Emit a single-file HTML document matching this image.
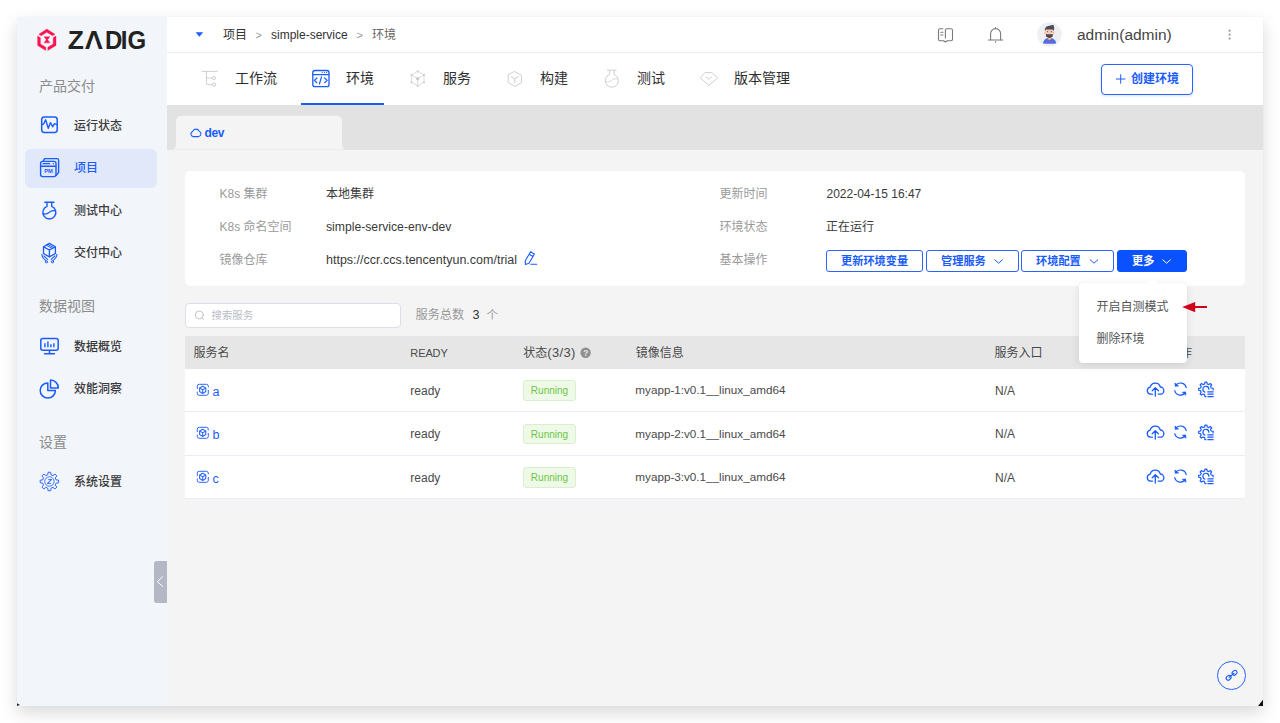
<!DOCTYPE html>
<html lang="zh-CN">
<head>
<meta charset="utf-8">
<title>Zadig - 环境</title>
<style>
*{box-sizing:border-box;margin:0;padding:0}
html,body{width:1280px;height:723px;overflow:hidden;background:#fff}
body{font-family:"Liberation Sans","Noto Sans CJK SC",sans-serif;color:#303133;font-size:12px;position:relative}
.win{position:absolute;left:17px;top:17px;width:1246px;height:689px;background:#f4f4f4;box-shadow:0 0 1px rgba(0,0,0,.05),0 7px 16px rgba(0,0,0,.15)}
.o{position:absolute;left:-17px;top:-17px;width:1280px;height:723px;overflow:hidden;clip-path:inset(17px 17px 17px 17px)}
.o>*,.a{position:absolute}
svg{position:absolute;overflow:visible}
.t{white-space:nowrap;line-height:20px;height:20px}
/* sidebar */
.side{left:17px;top:17px;width:150px;height:689px;background:#f2f5fa}
.grp{left:39px;font-size:14px;color:#8c8c8c}
.on{left:25px;top:148.5px;width:132px;height:39.5px;border-radius:6px;background:#e0e8fa}
.mi{left:74px;font-size:12px;font-weight:500;color:#3a3a3a}
.mi.act{color:#1a5cff}
/* header */
.hdr{left:167px;top:17px;width:1096px;height:36px;background:#fff;border-bottom:1px solid #e8ebf1}
.nav{left:167px;top:53px;width:1096px;height:52px;background:#fff}
.nt{top:68px;font-size:14px;font-weight:400;color:#2e2e2e}
.band{left:167px;top:105px;width:1096px;height:44.5px;background:#e2e2e2}
.card{left:185px;top:170.5px;width:1060px;height:115.5px;background:#fff;border-radius:5px}
.lbl{font-size:12px;color:#9a9a9a}
.val{font-size:12.5px;color:#3a3a3a}
.btn{top:250.3px;height:22px;border:1px solid #2a63ff;border-radius:3px;background:#fff;color:#1a5cff;font-size:11.2px;font-weight:700;line-height:20px;white-space:nowrap;padding-left:14px}
.btn.pri{background:#0a52ff;border-color:#0a52ff;color:#fff}
.th{left:185px;top:336.2px;width:1060px;height:32.8px;background:#e6e6e6}
.hc{top:343px;font-size:12px;color:#4a4a4a}
.row{left:185px;width:1060px;background:#fff;border-bottom:1px solid #e9edf5}
.rc{font-size:12px;color:#4a4a4a}
.nm{font-size:12.5px;color:#1a5cff}
.tag{left:522.8px;width:53.4px;height:20.6px;line-height:19.4px;border:1px solid #d9f0cb;background:#eff9e8;color:#6cc644;font-size:10px;border-radius:3px;text-align:center;white-space:nowrap}
.dd{left:1079px;top:283px;width:107.5px;height:80px;background:#fff;border-radius:4px;box-shadow:0 2px 10px rgba(0,0,0,.10),0 0 1px rgba(0,0,0,.08)}
.ddi{left:1096.5px;font-size:12px;color:#555}
</style>
</head>
<body>
<div class="win"><div class="o">
<!-- ============ SIDEBAR ============ -->
<div class="side"></div>
<svg style="left:30px;top:24px" width="130" height="32" viewBox="30 24 130 32">
  <g fill="#ff1352" stroke="#ff1352" stroke-width=".35" stroke-linejoin="round">
    <path d="M38.8 34.3 L46.8 29.1 L55 34.3 L52.6 35.8 L46.8 32.3 L41.2 35.8Z"/>
    <path d="M37.6 36 L40.4 37.7 L40.4 44 L45.8 47.2 L45.8 50.4 L37.6 45.5Z"/>
    <path d="M56 36 L53.2 37.7 L53.2 44 L47.8 47.2 L47.8 50.4 L56 45.5Z"/>
    <path d="M44 36.7 L50 36.7 L47.6 39.7 L50 42.8 L44 42.8 L46.3 39.7Z"/>
  </g>
  <g font-family="Liberation Sans, sans-serif" font-weight="700" font-size="24" fill="#222"><text transform="translate(67.7 49) scale(1.1 1.04)">Z</text><text transform="translate(84.6 49) scale(1.08 1.04)">A</text><text transform="translate(105 49) scale(1 1.04)" x="0 15.8 22.4">DIG</text></g>
  <path d="M91.5 41.5 L96.25 41.5 L97.6 45.5 L90.2 45.5Z" fill="#f2f5fa"/>
</svg>
<div class="t grp" style="top:75.5px">产品交付</div>
<div class="on"></div>
<div class="t mi" style="top:115.7px">运行状态</div>
<div class="t mi act" style="top:158.2px">项目</div>
<div class="t mi" style="top:200.7px">测试中心</div>
<div class="t mi" style="top:243.2px">交付中心</div>
<div class="t grp" style="top:296px">数据视图</div>
<div class="t mi" style="top:336.7px">数据概览</div>
<div class="t mi" style="top:379.2px">效能洞察</div>
<div class="t grp" style="top:432px">设置</div>
<div class="t mi" style="top:472.2px">系统设置</div>
<!-- sidebar icons -->
<svg style="left:36px;top:110px" width="30" height="30" viewBox="36 110 30 30" fill="none" stroke="#1a5cff" stroke-width="1.5" stroke-linecap="round" stroke-linejoin="round">
  <rect x="41.7" y="117" width="15.5" height="15.4" rx="2.6"/>
  <path d="M41.8 124.6 L43.6 124 L45.6 119.8 L48.3 128.3 L50.5 122.6 L52.7 126.8 L54.4 123.6 L57 124.6" stroke-width="1.4"/>
</svg>
<svg style="left:36px;top:152px" width="30" height="30" viewBox="36 152 30 30" fill="none" stroke="#1a5cff" stroke-width="1.4" stroke-linejoin="round" stroke-linecap="round">
  <path d="M43.2 161 L44.6 158.6 L57 158.6 Q58.6 158.6 58.6 160.2 L58.6 172.6 L56.2 175.2"/>
  <rect x="40.6" y="161.4" width="15.4" height="15.2" rx="2"/>
  <path d="M41 166.2 L55.6 166.2"/>
  <path d="M43 163.7 L49.6 163.7" stroke-width="1.2"/>
  <circle cx="53.4" cy="163.7" r=".7" fill="#1a5cff" stroke="none"/>
  <text x="44.2" y="173.3" font-family="Liberation Sans, sans-serif" font-size="5.6" font-weight="700" fill="#1a5cff" stroke="none" textLength="8.6" lengthAdjust="spacingAndGlyphs">PM</text>
</svg>
<svg style="left:36px;top:195px" width="30" height="30" viewBox="36 195 30 30" fill="none" stroke="#1a5cff" stroke-width="1.4" stroke-linecap="round" stroke-linejoin="round">
  <path d="M44.8 202.2 L54 202.2"/>
  <path d="M47 202.4 L47 206.4 A6.5 6.5 0 1 0 51.7 206.4 L51.7 202.4"/>
  <path d="M43.2 213.6 C46 215.4 48.4 213 50 211.8 C51.8 210.6 53.8 210.4 55.6 210.8" stroke-width="1.2"/>
</svg>
<svg style="left:36px;top:238px" width="30" height="30" viewBox="36 238 30 30" fill="none" stroke="#1a5cff" stroke-width="1.3" stroke-linecap="round" stroke-linejoin="round">
  <path d="M49.4 243.4 L55.4 246.7 L55.4 253.5 L49.4 256.9 L43.5 253.5 L43.5 246.7Z"/>
  <path d="M43.7 246.9 L49.4 250 L55.2 246.9 M49.4 250 L49.4 256.6"/>
  <path d="M46.3 245.1 L52.2 248.4 M47.7 244.3 L53.6 247.6" stroke-width="1"/>
  <path d="M41.9 254.2 C41.9 257 43.4 258.6 45.8 260.6 M43.9 255.8 L47.6 259.4" stroke-width="1.1"/>
  <path d="M56.9 254.2 C56.9 257 55.4 258.6 53 260.6 M54.9 255.8 L51.2 259.4" stroke-width="1.1"/>
  <circle cx="46.4" cy="261.8" r="1.1" stroke-width="1"/>
  <circle cx="52.4" cy="261.8" r="1.1" stroke-width="1"/>
</svg>
<svg style="left:36px;top:331px" width="30" height="30" viewBox="36 331 30 30" fill="none" stroke="#1a5cff" stroke-width="1.5" stroke-linecap="round" stroke-linejoin="round">
  <rect x="40.8" y="338.6" width="17.4" height="11.6" rx="2"/>
  <path d="M49.5 350.4 L49.5 353.4 M44.6 353.8 L54.4 353.8"/>
  <path d="M44.9 343.2 L44.9 347.3 M47.9 341.6 L47.9 347.3 M50.9 344.2 L50.9 347.3 M53.9 343.2 L53.9 347.3" stroke-width="1.4" stroke-linecap="butt"/>
</svg>
<svg style="left:36px;top:374px" width="30" height="30" viewBox="36 374 30 30" fill="none" stroke="#1a5cff" stroke-width="1.5" stroke-linejoin="round">
  <path d="M47.8 382.9 A7.6 7.6 0 1 0 55.4 390.5 L47.8 390.5Z"/>
  <path d="M50.5 380.1 L50.5 387.9 L58.3 387.9 A7.8 7.8 0 0 0 50.5 380.1Z"/>
</svg>
<svg style="left:36.1px;top:467.4px" width="30" height="30" viewBox="36 467 30 30" fill="none" stroke="#2b66ff" stroke-width="1" stroke-linejoin="round">
  <path d="M47.79 474.79 L48.09 472.29 L50.71 472.29 L51.01 474.79 L53.01 475.62 L54.98 474.06 L56.84 475.92 L55.28 477.89 L56.11 479.89 L58.61 480.19 L58.61 482.81 L56.11 483.11 L55.28 485.11 L56.84 487.08 L54.98 488.94 L53.01 487.38 L51.01 488.21 L50.71 490.71 L48.09 490.71 L47.79 488.21 L45.79 487.38 L43.82 488.94 L41.96 487.08 L43.52 485.11 L42.69 483.11 L40.19 482.81 L40.19 480.19 L42.69 479.89 L43.52 477.89 L41.96 475.92 L43.82 474.06 L45.79 475.62Z"/>
  <circle cx="49.4" cy="481.5" r="4.7" stroke-width=".9"/>
  <text x="46.9" y="484.3" font-family="Liberation Sans, sans-serif" font-size="7.6" font-weight="700" font-style="italic" fill="#2b66ff" stroke="none">Z</text>
</svg>
<!-- collapse handle -->
<div style="left:153.5px;top:561px;width:13.5px;height:41.5px;background:#b4b8c5;border-radius:3px 0 0 3px"></div>
<svg style="left:153px;top:572px" width="14" height="20" viewBox="153 572 14 20" fill="none" stroke="#fff" stroke-width="1" stroke-linecap="round" stroke-linejoin="round"><path d="M162.8 576.6 L157.4 581.6 L162.8 586.6"/></svg>
<!-- ============ HEADER ============ -->
<div class="hdr"></div>
<svg style="left:194px;top:30px" width="12" height="8" viewBox="194 30 12 8"><path d="M195.6 32.2 L203.2 32.2 L199.4 36.8Z" fill="#1a5cff"/></svg>
<div class="t" style="left:223px;top:24.6px;font-size:12px;color:#333">项目</div>
<div class="t" style="left:255.5px;top:24.6px;font-size:11px;color:#999">&gt;</div>
<div class="t" style="left:271px;top:24.6px;font-size:12px;color:#333">simple-service</div>
<div class="t" style="left:356.5px;top:24.6px;font-size:11px;color:#999">&gt;</div>
<div class="t" style="left:372px;top:24.6px;font-size:12px;color:#666">环境</div>
<!-- book -->
<svg style="left:934px;top:24px" width="24" height="22" viewBox="934 24 24 22" fill="none" stroke="#7a7a7a" stroke-width="1.1" stroke-linecap="round" stroke-linejoin="round">
  <path d="M942.8 28.7 L940 28.7 Q938.5 28.7 938.5 30.2 L938.5 39.2 Q938.5 40.7 940 40.7 L943.6 40.7 L945.4 42 L947.2 40.7 L951 40.7 Q952.5 40.7 952.5 39.2 L952.5 30.2 Q952.5 28.7 951 28.7 L946.9 28.7 Q945.4 28.7 945.4 30.2 L945.4 38"/>
  <path d="M940.7 32.2 L942.9 32.2 M940.7 35 L942.9 35"/>
</svg>
<!-- bell -->
<svg style="left:984px;top:24px" width="24" height="22" viewBox="984 24 24 22" fill="none" stroke="#7a7a7a" stroke-width="1.1" stroke-linecap="round" stroke-linejoin="round">
  <path d="M990.6 39.8 L990.6 33.6 A5 5 0 0 1 1000.6 33.6 L1000.6 39.8"/>
  <path d="M988.4 40 L1002.8 40 M995.6 28.4 L995.6 27.6 M995.6 41.6 L995.6 42.2"/>
</svg>
<!-- avatar -->
<svg style="left:1036px;top:21px" width="28" height="28" viewBox="1036 21 28 28">
  <circle cx="1049.4" cy="34.4" r="12.2" fill="#eeeff2"/>
  <path d="M1043 43.6 Q1043.4 39.6 1046.6 38.4 L1052.4 38.4 Q1055.8 39.6 1056.2 43.6Z" fill="#3f6dff"/><path d="M1044.8 43.6 L1045.6 39.4 L1046.8 38.4 L1052.2 38.4 L1053.4 39.4 L1054.4 43.6Z" fill="#6069d4"/>
  <path d="M1047.6 36.5 L1051.4 36.5 L1051.2 39 L1049.5 40.2 L1047.8 39Z" fill="#efb9a0"/>
  <rect x="1045" y="28.4" width="8.6" height="8.4" rx="2.4" fill="#f6c9b8"/>
  <path d="M1044.8 31 Q1044.4 26.8 1048.2 26 L1053.4 24.8 Q1054.8 27.6 1053.8 31 L1052.8 29.6 L1045.8 29.6Z" fill="#4c4e52"/>
  <circle cx="1044.9" cy="32.6" r=".9" fill="#f2bfae"/><circle cx="1053.8" cy="32.6" r=".9" fill="#f2bfae"/><path d="M1046 34.1 L1052.8 34.1 L1052.6 36.6 Q1049.4 39.4 1046.2 36.6Z" fill="#43464b"/><path d="M1046.6 34 L1052.2 34 L1052.2 34.7 L1046.6 34.7Z" fill="#7d7f83"/>
  <circle cx="1047.4" cy="31.6" r=".55" fill="#556"/><circle cx="1051.4" cy="31.6" r=".55" fill="#556"/>
  <circle cx="1049.5" cy="35.6" r=".7" fill="#e8141c"/>
</svg>
<div class="t" style="left:1077px;top:24.5px;font-size:15.5px;color:#444">admin(admin)</div>
<svg style="left:1226px;top:28px" width="8" height="14" viewBox="1226 28 8 14" fill="#999"><circle cx="1229.6" cy="30.7" r="1.1"/><circle cx="1229.6" cy="34.6" r="1.1"/><circle cx="1229.6" cy="38.6" r="1.1"/></svg>
<!-- ============ NAV ============ -->
<div class="nav"></div>
<div class="t nt" style="left:235px">工作流</div>
<div class="t nt" style="left:346px">环境</div>
<div class="t nt" style="left:443px">服务</div>
<div class="t nt" style="left:540px">构建</div>
<div class="t nt" style="left:637px">测试</div>
<div class="t nt" style="left:734px">版本管理</div>
<div style="left:301px;top:102.5px;width:83px;height:2px;background:#1a5cff"></div>
<svg style="left:198px;top:66px" width="24" height="24" viewBox="198 66 24 24" fill="none" stroke="#cfcfcf" stroke-width="1" stroke-linecap="round">
  <path d="M202.2 71.4 L217.2 71.4 M206.4 71.4 L206.4 83 Q206.4 84.6 208 84.6 L212.4 84.6 M206.4 78 L212.4 78"/>
  <circle cx="214.1" cy="78" r="1.6"/><circle cx="214.1" cy="84.6" r="1.6"/>
</svg>
<svg style="left:308px;top:66px" width="26" height="26" viewBox="308 66 26 26" fill="none" stroke="#1a5cff" stroke-width="1.3" stroke-linecap="round" stroke-linejoin="round">
  <rect x="312.8" y="70.5" width="16.2" height="16.2" rx="2.2"/>
  <path d="M313 74.6 L328.8 74.6"/>
  <path d="M316.9 78 L314.4 80.4 L316.9 82.7 M324.6 78 L327.2 80.4 L324.6 82.7 M321.5 76.8 L319.4 84" stroke-width="1.2"/>
  <g fill="#1a5cff" stroke="none"><circle cx="322.3" cy="72.6" r=".6"/><circle cx="324.5" cy="72.6" r=".6"/><circle cx="326.6" cy="72.6" r=".6"/></g>
</svg>
<svg style="left:406px;top:66px" width="24" height="26" viewBox="406 66 24 26" fill="none" stroke="#d2d2d2" stroke-width=".8">
  <path d="M417.7 71.3 L424 74.9 L424 82.3 L417.7 85.9 L411.5 82.3 L411.5 74.9Z M411.5 74.9 L417.7 78.7 L424 74.9 M417.7 78.7 L417.7 85.9"/>
  <g fill="#d0d0d0" stroke="none"><circle cx="417.7" cy="71.3" r="1.1"/><circle cx="424" cy="74.9" r="1.1"/><circle cx="424" cy="82.3" r="1.1"/><circle cx="417.7" cy="85.9" r="1.1"/><circle cx="411.5" cy="82.3" r="1.1"/><circle cx="411.5" cy="74.9" r="1.1"/><circle cx="417.7" cy="78.7" r="1.6" fill="#c8c8c8"/></g>
</svg>
<svg style="left:503px;top:66px" width="24" height="26" viewBox="503 66 24 26" fill="none" stroke="#cfcfcf" stroke-width="1" stroke-linecap="round" stroke-linejoin="round">
  <path d="M514.8 71.5 L521.4 75.3 L521.4 82.6 L514.8 86.4 L508.2 82.6 L508.2 75.3Z"/>
  <path d="M511.3 76.6 L514.8 78.8 L518.4 76.6 M514.8 78.8 L514.8 82.6"/>
</svg>
<svg style="left:600px;top:66px" width="24" height="26" viewBox="600 66 24 26" fill="none" stroke="#cfcfcf" stroke-width="1" stroke-linecap="round" stroke-linejoin="round">
  <path d="M607.4 70.2 L616.2 70.2"/>
  <path d="M609.6 70.4 L609.6 74.4 A6.6 6.6 0 1 0 614 74.4 L614 70.4"/>
  <path d="M605.6 81.4 C608.4 83.2 610.8 81 612.4 79.8 C614.2 78.6 616.2 78.4 618 78.8" stroke-width=".9"/>
</svg>
<svg style="left:697px;top:66px" width="24" height="26" viewBox="697 66 24 26" fill="none" stroke="#cfcfcf" stroke-width="1" stroke-linecap="round" stroke-linejoin="round">
  <path d="M705.4 72.6 L711.8 72.6 L717.6 78 L708.8 85.4 L700.4 78Z"/>
  <path d="M706.3 77.1 L708.8 79.3 L711.6 77.1"/>
</svg>
<!-- create button -->
<div style="left:1101px;top:63.5px;width:92px;height:31px;border:1px solid #2a63ff;border-radius:4px;background:#fff;box-shadow:0 1px 3px rgba(26,92,255,.18)"></div>
<svg style="left:1114px;top:73px" width="14" height="12" viewBox="1114 73 14 12" stroke="#1a5cff" stroke-width="1" fill="none"><path d="M1116 79 L1125.4 79 M1120.7 74.3 L1120.7 83.7"/></svg>
<div class="t" style="left:1131px;top:69px;font-size:12px;font-weight:700;color:#1a5cff">创建环境</div>
<!-- ============ ENV TAB BAND ============ -->
<div class="band"></div>
<svg style="left:167px;top:105px" width="200" height="46" viewBox="167 105 200 46"><path d="M170.8 149.5 Q176 149.5 176 144.3 L176 121.5 Q176 115.8 181.7 115.8 L336.4 115.8 Q342.1 115.8 342.1 121.5 L342.1 144.3 Q342.1 149.5 347.3 149.5Z" fill="#f4f4f4"/></svg>
<svg style="left:188px;top:126px" width="16" height="14" viewBox="188 126 16 14" fill="none" stroke="#1a5cff" stroke-width="1.1" stroke-linejoin="round"><path d="M193.3 136.6 A2.7 2.7 0 0 1 192.6 131.4 A3.6 3.6 0 0 1 199.2 131.2 A2.8 2.8 0 0 1 198.4 136.6Z"/></svg>
<div class="t" style="left:204.6px;top:123.4px;font-size:12px;font-weight:700;color:#1a5cff;letter-spacing:-.4px">dev</div>
<!-- ============ INFO CARD ============ -->
<div class="card"></div>
<div class="t lbl" style="left:219.5px;top:184px">K8s 集群</div>
<div class="t lbl" style="left:219.5px;top:216.9px">K8s 命名空间</div>
<div class="t lbl" style="left:219.5px;top:250.2px">镜像仓库</div>
<div class="t val" style="left:326px;top:184px;font-size:12px">本地集群</div>
<div class="t val" style="left:326px;top:216.9px;font-size:12.2px">simple-service-env-dev</div>
<div class="t val" style="left:326px;top:250.2px;font-size:12.5px">https://ccr.ccs.tencentyun.com/trial</div>
<svg style="left:522px;top:249px" width="18" height="18" viewBox="522 249 18 18" fill="none" stroke="#1a5cff" stroke-width="1.1" stroke-linejoin="round" stroke-linecap="round">
  <path d="M530.6 251.7 L534.4 254 L529 263.2 L525.4 264.4 L525.2 261Z M529.2 254.2 L533 256.5 M530.8 264.2 L536.8 264.2"/>
</svg>
<div class="t lbl" style="left:719.5px;top:184px">更新时间</div>
<div class="t lbl" style="left:719.5px;top:216.9px">环境状态</div>
<div class="t lbl" style="left:719.5px;top:250.2px">基本操作</div>
<div class="t val" style="left:826.5px;top:184px;font-size:12px">2022-04-15 16:47</div>
<div class="t val" style="left:826px;top:216.9px;font-size:12px">正在运行</div>
<div class="btn" style="left:826px;width:97px">更新环境变量</div>
<div class="btn" style="left:926px;width:92.5px">管理服务</div>
<div class="btn" style="left:1021px;width:93px">环境配置</div>
<div class="btn pri" style="left:1117px;width:70px">更多</div>
<svg style="left:990px;top:256px" width="190" height="10" viewBox="990 256 190 10" fill="none" stroke-width="1" stroke-linecap="round" stroke-linejoin="round">
  <path d="M994.8 259.8 L998.6 263.2 L1002.4 259.8 M1090.2 259.8 L1094 263.2 L1097.8 259.8" stroke="#1a5cff"/>
  <path d="M1162.8 259.8 L1166.6 263.2 L1170.4 259.8" stroke="#fff"/>
</svg>
<!-- ============ SEARCH ROW ============ -->
<div style="left:185px;top:303px;width:216px;height:24.5px;border:1px solid #dcdfe6;border-radius:4px;background:#fff"></div>
<svg style="left:194px;top:309px" width="12" height="12" viewBox="194 309 12 12" fill="none" stroke="#b8bcc4" stroke-width=".9" stroke-linecap="round"><circle cx="199.2" cy="315" r="3.9"/><path d="M202.2 318 L203.9 319.7"/></svg>
<div class="t" style="left:211.5px;top:305.6px;font-size:10.4px;color:#b9bdc6">搜索服务</div>
<div class="t" style="left:415.5px;top:305px;font-size:12.2px;color:#999">服务总数</div>
<div class="t" style="left:472.5px;top:305.2px;font-size:12.5px;color:#333">3</div>
<div class="t" style="left:486.5px;top:305px;font-size:11.5px;color:#999">个</div>
<!-- ============ TABLE ============ -->
<div class="th"></div>
<div class="t hc" style="left:193.5px">服务名</div>
<div class="t hc" style="left:410.3px;font-size:11px;letter-spacing:-.1px">READY</div>
<div class="t hc" style="left:523.3px">状态<span style="font-size:13px;letter-spacing:.35px">(3/3)</span></div>
<svg style="left:579.3px;top:346.6px" width="13" height="13" viewBox="579 347 13 13"><circle cx="585.6" cy="352.8" r="5.2" fill="#8f8f8f"/><text x="583.3" y="355.8" font-family="Liberation Sans, sans-serif" font-size="8.4" font-weight="700" fill="#e6e6e6">?</text></svg>
<div class="t hc" style="left:635.8px">镜像信息</div>
<div class="t hc" style="left:994.5px">服务入口</div>
<div class="t hc" style="left:1168px">操作</div>
<div class="row" style="top:369px;height:42.5px"></div>
<svg style="left:195px;top:381.9px" width="16" height="16" viewBox="195 382 16 16" fill="none" stroke="#2b66ff" stroke-width="1" stroke-linecap="round" stroke-linejoin="round"><path d="M208.3 387 L208.3 386.2 Q208.3 384.3 206.4 384.3 L199.2 384.3 Q197.3 384.3 197.3 386.2 L197.3 388.6 M197.3 392 L197.3 393.4 Q197.3 395.3 199.2 395.3 L206.4 395.3 Q208.3 395.3 208.3 393.4 L208.3 390.4"/><path d="M202.7 386.2 L205.8 388 L205.8 391.6 L202.7 393.4 L199.6 391.6 L199.6 388Z M199.8 388.1 L202.7 389.8 L205.6 388.1 M202.7 389.8 L202.7 393.2" stroke-width="1.1"/></svg>
<div class="t nm" style="left:212.6px;top:381.6px">a</div>
<div class="t rc" style="left:410.3px;top:380.6px">ready</div>
<div class="tag" style="top:380.1px">Running</div>
<div class="t rc" style="left:635.3px;top:380.4px;font-size:11.7px">myapp-1:v0.1__linux_amd64</div>
<div class="t rc" style="left:995px;top:380.6px">N/A</div>
<svg style="left:1144px;top:378.6px" width="72" height="20" viewBox="1144 379 72 20" fill="none" stroke="#1a5cff" stroke-width="1.3" stroke-linecap="round" stroke-linejoin="round"><path d="M1152.4 394.2 L1150.4 394.2 A3.6 3.6 0 0 1 1150.2 387.1 A5.2 5.2 0 0 1 1160.3 387 A3.6 3.6 0 0 1 1160.2 394.2 L1158.2 394.2"/><path d="M1155.3 396 L1155.3 388 M1152.2 390.7 L1155.3 387.6 L1158.4 390.7"/><path d="M1174.8 390.6 A5.8 5.8 0 0 0 1185.4 392.4 M1186.2 387.6 A5.8 5.8 0 0 0 1175.6 385.8" stroke-width="1.2"/><path d="M1175 383.4 L1175.3 386.2 L1178.2 386Z M1185.9 394.8 L1185.5 392 L1182.7 392.3Z" fill="#1a5cff" stroke-width=".8"/><path d="M1205.90 396.70 L1204.93 396.54 L1204.62 394.65 L1203.03 393.99 L1201.47 395.10 L1200.10 393.73 L1201.21 392.17 L1200.55 390.58 L1198.66 390.27 L1198.66 388.33 L1200.55 388.02 L1201.21 386.43 L1200.10 384.87 L1201.47 383.50 L1203.03 384.61 L1204.62 383.95 L1204.93 382.06 L1206.87 382.06 L1207.18 383.95 L1208.77 384.61 L1210.33 383.50 L1211.70 384.87 L1210.59 386.43 L1211.25 388.02 L1213.14 388.33 L1213.14 389.93" stroke-width="1.2"/><path d="M1204.9 392.1 A3 3 0 1 1 1208.9 389.3" stroke-width="1.2"/><path d="M1207.4 391.8 L1213.6 391.8 M1207.4 394.2 L1213.6 394.2 M1207.4 396.6 L1213.6 396.6" stroke-width="1.3" stroke-linecap="butt"/></svg>
<div class="row" style="top:412px;height:43.5px"></div>
<svg style="left:195px;top:425.4px" width="16" height="16" viewBox="195 382 16 16" fill="none" stroke="#2b66ff" stroke-width="1" stroke-linecap="round" stroke-linejoin="round"><path d="M208.3 387 L208.3 386.2 Q208.3 384.3 206.4 384.3 L199.2 384.3 Q197.3 384.3 197.3 386.2 L197.3 388.6 M197.3 392 L197.3 393.4 Q197.3 395.3 199.2 395.3 L206.4 395.3 Q208.3 395.3 208.3 393.4 L208.3 390.4"/><path d="M202.7 386.2 L205.8 388 L205.8 391.6 L202.7 393.4 L199.6 391.6 L199.6 388Z M199.8 388.1 L202.7 389.8 L205.6 388.1 M202.7 389.8 L202.7 393.2" stroke-width="1.1"/></svg>
<div class="t nm" style="left:212.6px;top:425.1px">b</div>
<div class="t rc" style="left:410.3px;top:424.1px">ready</div>
<div class="tag" style="top:423.6px">Running</div>
<div class="t rc" style="left:635.3px;top:423.9px;font-size:11.7px">myapp-2:v0.1__linux_amd64</div>
<div class="t rc" style="left:995px;top:424.1px">N/A</div>
<svg style="left:1144px;top:422.1px" width="72" height="20" viewBox="1144 379 72 20" fill="none" stroke="#1a5cff" stroke-width="1.3" stroke-linecap="round" stroke-linejoin="round"><path d="M1152.4 394.2 L1150.4 394.2 A3.6 3.6 0 0 1 1150.2 387.1 A5.2 5.2 0 0 1 1160.3 387 A3.6 3.6 0 0 1 1160.2 394.2 L1158.2 394.2"/><path d="M1155.3 396 L1155.3 388 M1152.2 390.7 L1155.3 387.6 L1158.4 390.7"/><path d="M1174.8 390.6 A5.8 5.8 0 0 0 1185.4 392.4 M1186.2 387.6 A5.8 5.8 0 0 0 1175.6 385.8" stroke-width="1.2"/><path d="M1175 383.4 L1175.3 386.2 L1178.2 386Z M1185.9 394.8 L1185.5 392 L1182.7 392.3Z" fill="#1a5cff" stroke-width=".8"/><path d="M1205.90 396.70 L1204.93 396.54 L1204.62 394.65 L1203.03 393.99 L1201.47 395.10 L1200.10 393.73 L1201.21 392.17 L1200.55 390.58 L1198.66 390.27 L1198.66 388.33 L1200.55 388.02 L1201.21 386.43 L1200.10 384.87 L1201.47 383.50 L1203.03 384.61 L1204.62 383.95 L1204.93 382.06 L1206.87 382.06 L1207.18 383.95 L1208.77 384.61 L1210.33 383.50 L1211.70 384.87 L1210.59 386.43 L1211.25 388.02 L1213.14 388.33 L1213.14 389.93" stroke-width="1.2"/><path d="M1204.9 392.1 A3 3 0 1 1 1208.9 389.3" stroke-width="1.2"/><path d="M1207.4 391.8 L1213.6 391.8 M1207.4 394.2 L1213.6 394.2 M1207.4 396.6 L1213.6 396.6" stroke-width="1.3" stroke-linecap="butt"/></svg>
<div class="row" style="top:455.5px;height:43.5px"></div>
<svg style="left:195px;top:468.9px" width="16" height="16" viewBox="195 382 16 16" fill="none" stroke="#2b66ff" stroke-width="1" stroke-linecap="round" stroke-linejoin="round"><path d="M208.3 387 L208.3 386.2 Q208.3 384.3 206.4 384.3 L199.2 384.3 Q197.3 384.3 197.3 386.2 L197.3 388.6 M197.3 392 L197.3 393.4 Q197.3 395.3 199.2 395.3 L206.4 395.3 Q208.3 395.3 208.3 393.4 L208.3 390.4"/><path d="M202.7 386.2 L205.8 388 L205.8 391.6 L202.7 393.4 L199.6 391.6 L199.6 388Z M199.8 388.1 L202.7 389.8 L205.6 388.1 M202.7 389.8 L202.7 393.2" stroke-width="1.1"/></svg>
<div class="t nm" style="left:212.6px;top:468.6px">c</div>
<div class="t rc" style="left:410.3px;top:467.6px">ready</div>
<div class="tag" style="top:467.1px">Running</div>
<div class="t rc" style="left:635.3px;top:467.4px;font-size:11.7px">myapp-3:v0.1__linux_amd64</div>
<div class="t rc" style="left:995px;top:467.6px">N/A</div>
<svg style="left:1144px;top:465.6px" width="72" height="20" viewBox="1144 379 72 20" fill="none" stroke="#1a5cff" stroke-width="1.3" stroke-linecap="round" stroke-linejoin="round"><path d="M1152.4 394.2 L1150.4 394.2 A3.6 3.6 0 0 1 1150.2 387.1 A5.2 5.2 0 0 1 1160.3 387 A3.6 3.6 0 0 1 1160.2 394.2 L1158.2 394.2"/><path d="M1155.3 396 L1155.3 388 M1152.2 390.7 L1155.3 387.6 L1158.4 390.7"/><path d="M1174.8 390.6 A5.8 5.8 0 0 0 1185.4 392.4 M1186.2 387.6 A5.8 5.8 0 0 0 1175.6 385.8" stroke-width="1.2"/><path d="M1175 383.4 L1175.3 386.2 L1178.2 386Z M1185.9 394.8 L1185.5 392 L1182.7 392.3Z" fill="#1a5cff" stroke-width=".8"/><path d="M1205.90 396.70 L1204.93 396.54 L1204.62 394.65 L1203.03 393.99 L1201.47 395.10 L1200.10 393.73 L1201.21 392.17 L1200.55 390.58 L1198.66 390.27 L1198.66 388.33 L1200.55 388.02 L1201.21 386.43 L1200.10 384.87 L1201.47 383.50 L1203.03 384.61 L1204.62 383.95 L1204.93 382.06 L1206.87 382.06 L1207.18 383.95 L1208.77 384.61 L1210.33 383.50 L1211.70 384.87 L1210.59 386.43 L1211.25 388.02 L1213.14 388.33 L1213.14 389.93" stroke-width="1.2"/><path d="M1204.9 392.1 A3 3 0 1 1 1208.9 389.3" stroke-width="1.2"/><path d="M1207.4 391.8 L1213.6 391.8 M1207.4 394.2 L1213.6 394.2 M1207.4 396.6 L1213.6 396.6" stroke-width="1.3" stroke-linecap="butt"/></svg>
<!-- ============ DROPDOWN ============ -->
<div class="dd"></div>
<svg style="left:1144px;top:276px" width="16" height="9" viewBox="1144 276 16 9"><path d="M1146.8 283.4 L1152.2 278.4 L1157.6 283.4Z" fill="#fff"/></svg>
<div class="t ddi" style="top:296.8px">开启自测模式</div>
<div class="t ddi" style="top:328.7px">删除环境</div>
<svg style="left:1180px;top:300px" width="30" height="14" viewBox="1180 300 30 14"><path d="M1182.2 307 L1195.2 302 L1195.2 305.9 L1207 305.9 L1207 308.1 L1195.2 308.1 L1195.2 312.2Z" fill="#d0021b"/></svg>
<!-- ============ FLOAT BUTTON ============ -->
<div style="left:1217.2px;top:660.9px;width:28.8px;height:28.8px;border:1.2px solid #2a63ff;border-radius:50%;background:#f6f6f6"></div>
<svg style="left:1224px;top:668px" width="16" height="16" viewBox="1224 668 16 16" fill="none" stroke="#1a5cff" stroke-width="1.1" stroke-linecap="round" stroke-linejoin="round">
  <g transform="translate(1231.6 675.3) rotate(-40)"><rect x="-6.5" y="-2" width="5.2" height="4" rx="2"/><rect x="1.3" y="-2" width="5.2" height="4" rx="2"/><path d="M-3.2 0 L3.2 0"/></g>
</svg>
<!-- window corner marks -->
<svg style="left:1256px;top:698px" width="8" height="9" viewBox="1256 698 8 9"><path d="M1263 699.8 L1263 706 L1258 706Z" fill="#111"/></svg>
<svg style="left:17px;top:702px" width="5" height="5" viewBox="17 702 5 5"><path d="M17 703.2 L20 705 L17 706Z" fill="#222"/></svg>
</div></div>
</body>
</html>
